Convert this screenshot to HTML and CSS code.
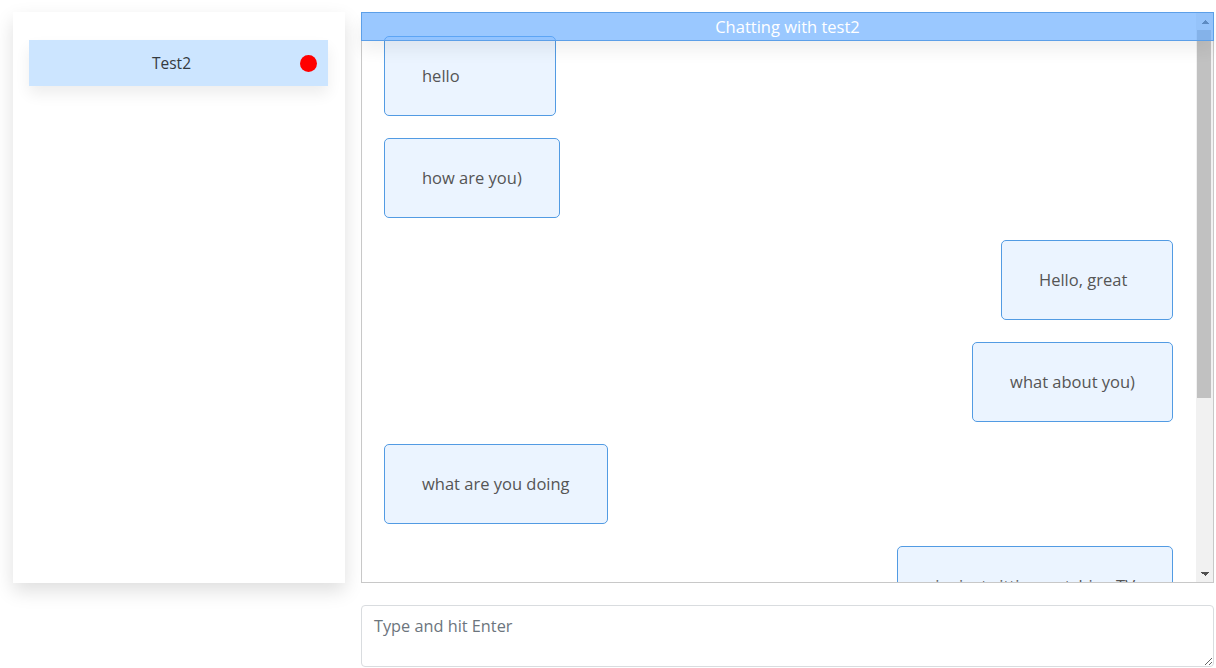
FILE: index.html
```html
<!DOCTYPE html>
<html lang="en">
<head>
<meta charset="utf-8">
<title>Chat</title>
<link rel="stylesheet" href="styles.css">
</head>
<body>
<div class="layout">
  <aside class="contacts">
    <div class="contact active">
      <span class="contact-name">Test2</span>
      <span class="unread-dot"></span>
    </div>
  </aside>
  <main class="chat-column">
    <section class="chat-window">
      <div class="chat-title">Chatting with test2</div>
      <div class="messages">
        <div class="msg in">hello</div>
        <div class="msg in">how are you)</div>
        <div class="msg out">Hello, great</div>
        <div class="msg out">what about you)</div>
        <div class="msg in">what are you doing</div>
        <div class="msg out">im just sitting watching TV</div>
        <div class="msg in">nice</div>
        <div class="msg out">yes</div>
      </div>
      <div class="scrollbar" aria-hidden="true">
        <span class="scroll-btn up"></span>
        <span class="scroll-track">
          <span class="scroll-thumb"></span>
        </span>
        <span class="scroll-btn down"></span>
      </div>
    </section>
    <textarea class="composer" rows="2" placeholder="Type and hit Enter"></textarea>
  </main>
</div>
</body>
</html>
```

FILE: styles.css
```css
* {
  box-sizing: border-box;
}

html, body {
  margin: 0;
  height: 100%;
  overflow: hidden;
  background: #fff;
}

body {
  font-family: "Open Sans", "Noto Sans", sans-serif;
  font-size: 16.5px;
  line-height: 24px;
  color: #212529;
}

.layout {
  display: grid;
  grid-template-columns: 332px 1fr;
  column-gap: 16px;
  padding: 12px 2px 0 13px;
}

/* contact list card */
.contacts {
  height: 571px;
  background: #fff;
  box-shadow: 0 8px 18px rgba(0, 0, 0, 0.13);
  padding: 28px 17px 0 16px;
}

.contact {
  display: flex;
  align-items: center;
  height: 46px;
  background: #cce5ff;
  box-shadow: 0 8px 14px rgba(0, 0, 0, 0.07);
}

.contact-name {
  flex: 1;
  text-align: center;
  padding-left: 14px;
  font-size: 15.5px;
  color: #343a40;
}

.unread-dot {
  width: 17px;
  height: 17px;
  margin-right: 11px;
  border-radius: 50%;
  background: #ff0000;
}

/* chat column */
.chat-column {
  display: flex;
  flex-direction: column;
  gap: 22px;
}

.chat-window {
  position: relative;
  display: flex;
  height: 571px;
  border: 1px solid #c8c8c8;
}

.chat-title {
  position: absolute;
  top: -1px;
  left: -1px;
  right: -1px;
  z-index: 2;
  height: 29px;
  border: 1px solid #5c9fe8;
  background: rgba(100, 170, 255, 0.65);
  color: #fff;
  text-align: center;
  font-size: 16.5px;
  line-height: 27px;
  box-shadow: 0 10px 16px rgba(0, 0, 0, 0.06);
}

.messages {
  flex: 1;
  overflow: hidden;
  padding: 23px 23px 10px 22px;
  display: flex;
  flex-direction: column;
  align-items: flex-start;
  gap: 22px;
}

.msg {
  flex: none;
  min-width: 172px;
  padding: 27px 37px;
  border: 1px solid #529be3;
  border-radius: 5px;
  background: #ebf4ff;
  color: #555;
  white-space: nowrap;
}

.msg.out {
  align-self: flex-end;
}

/* classic vertical scrollbar */
.scrollbar {
  width: 17px;
  display: flex;
  flex-direction: column;
  background: #f1f1f1;
}

.scroll-btn {
  flex: none;
  height: 17px;
  background-repeat: no-repeat;
  background-size: 8px 4px;
  background-position: center;
}

.scroll-btn.up {
  background-image: conic-gradient(from 135deg at 50% 0%, #505050 90deg, transparent 0);
}

.scroll-btn.down {
  background-image: conic-gradient(from -45deg at 50% 100%, #505050 90deg, transparent 0);
}

.scroll-track {
  flex: 1;
  display: flex;
  flex-direction: column;
}

.scroll-thumb {
  height: 368px;
  margin: 0 2px 0 1px;
  background: #c1c1c1;
}

/* message input */
.composer {
  display: block;
  width: 100%;
  height: 62px;
  padding: 8px 12px 4px;
  border: 1px solid #d9dcdf;
  border-radius: 4px;
  font-family: inherit;
  font-size: 16.3px;
  line-height: 24px;
  color: #495057;
  resize: vertical;
}

.composer::placeholder {
  color: #6c757d;
}
```
